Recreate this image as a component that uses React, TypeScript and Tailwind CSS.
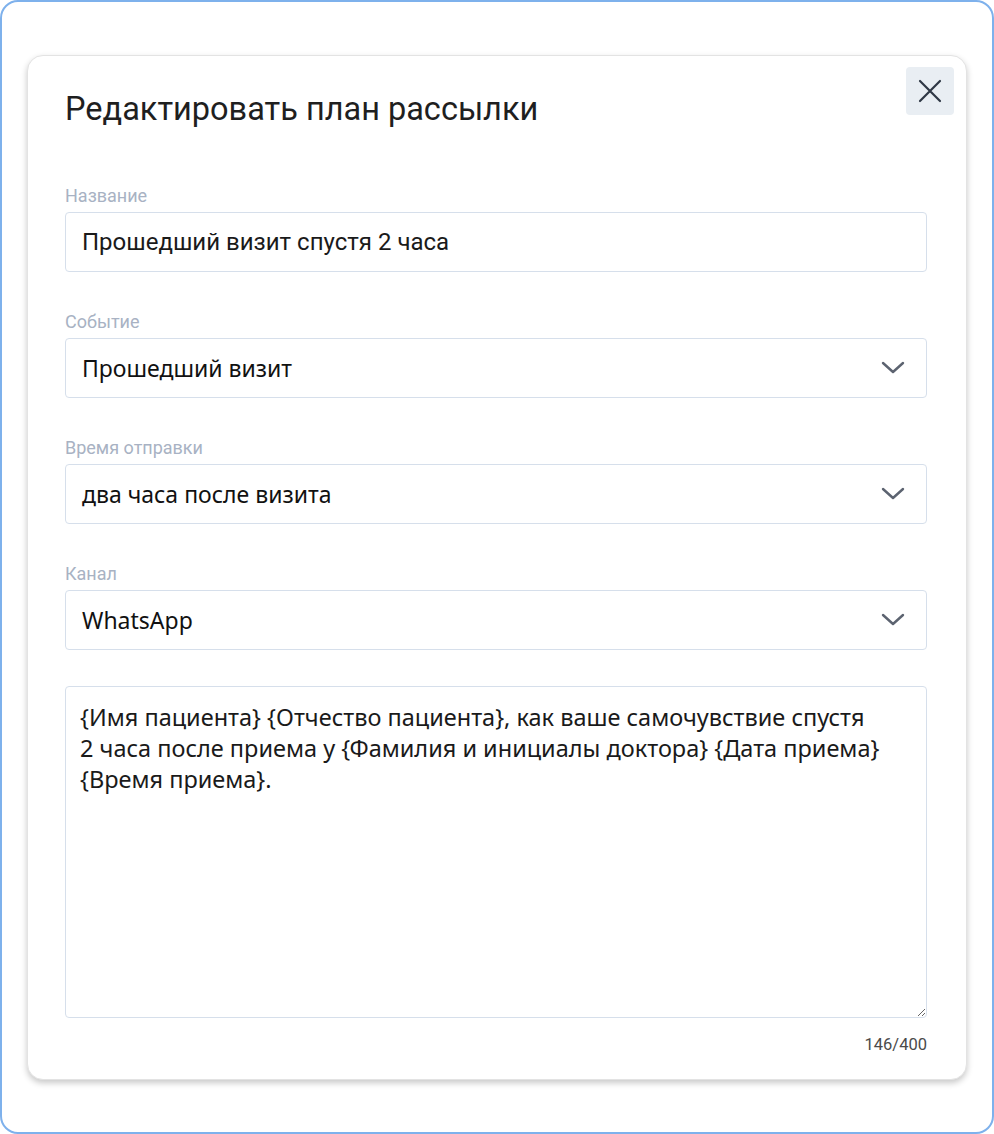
import { useState } from 'react';

const fieldBox =
  'flex h-[60px] w-full items-center rounded-[4px] border border-[#d6dfeb] bg-white px-4';

function Label({ children }: { children: string }) {
  return (
    <div className="mb-[6px] h-[20px] text-[18px] leading-[20px] text-[#a8b2c3] font-['Roboto',sans-serif]">
      {children}
    </div>
  );
}

function Chevron() {
  return (
    <svg width="26" height="16" viewBox="0 0 26 16" fill="none" className="shrink-0">
      <polyline
        points="3,3 13,12 23,3"
        stroke="#5c6370"
        strokeWidth="2.4"
        strokeLinecap="round"
        strokeLinejoin="round"
      />
    </svg>
  );
}

function SelectField({ label, value }: { label: string; value: string }) {
  return (
    <div className="mt-[40px]">
      <Label>{label}</Label>
      <button type="button" className={`${fieldBox} justify-between pr-5 text-left`}>
        <span className="text-[23px] text-[#111] font-['Noto_Sans',sans-serif]">{value}</span>
        <Chevron />
      </button>
    </div>
  );
}

const initialText =
  '{Имя пациента} {Отчество пациента}, как ваше самочувствие спустя\n2 часа после приема у {Фамилия и инициалы доктора} {Дата приема}\n{Время приема}.';

export default function App() {
  const [name, setName] = useState('Прошедший визит спустя 2 часа');
  const [text, setText] = useState(initialText);

  return (
    <div className="h-[1134px] w-full rounded-[18px] border-2 border-[#7eb1ec] bg-white pt-[53px]">
      <div className="relative mx-[25px] rounded-[16px] border border-[#e3e3e3] bg-white pl-[37px] pr-[39px] pt-[33px] pb-[25px] shadow-[0_3px_6px_rgba(0,0,0,0.22)]">
        <button
          type="button"
          aria-label="Закрыть"
          className="absolute right-[12px] top-[11px] flex h-12 w-12 items-center justify-center rounded-[4px] bg-[#e9eef3]"
        >
          <svg width="24" height="24" viewBox="0 0 24 24" fill="none">
            <path d="M2 2 22 22M22 2 2 22" stroke="#2f3845" strokeWidth="2.2" strokeLinecap="round" />
          </svg>
        </button>

        <h2 className="h-10 text-[32.5px] leading-10 font-normal text-[#1f1f1f] font-['Roboto',sans-serif]">
          Редактировать план рассылки
        </h2>

        <div className="mt-[57px]">
          <Label>Название</Label>
          <input
            type="text"
            value={name}
            onChange={(e) => setName(e.target.value)}
            className={`${fieldBox} text-[24px] text-[#1a1a1a] outline-none font-['Roboto',sans-serif]`}
          />
        </div>

        <SelectField label="Событие" value="Прошедший визит" />
        <SelectField label="Время отправки" value="два часа после визита" />
        <SelectField label="Канал" value="WhatsApp" />

        <textarea
          value={text}
          onChange={(e) => setText(e.target.value)}
          maxLength={400}
          className="mt-[36px] block h-[332px] w-full rounded-[4px] border border-[#d6dfeb] bg-white px-[14px] pt-[15px] pb-[14px] text-[23.5px] leading-[31px] text-[#1a1a1a] outline-none font-['Noto_Sans',sans-serif]"
        />
        <div className="mt-[18px] text-right text-[16.5px] leading-[18px] text-[#4a4a4a] font-['Roboto',sans-serif]">
          146/400
        </div>
      </div>
    </div>
  );
}
